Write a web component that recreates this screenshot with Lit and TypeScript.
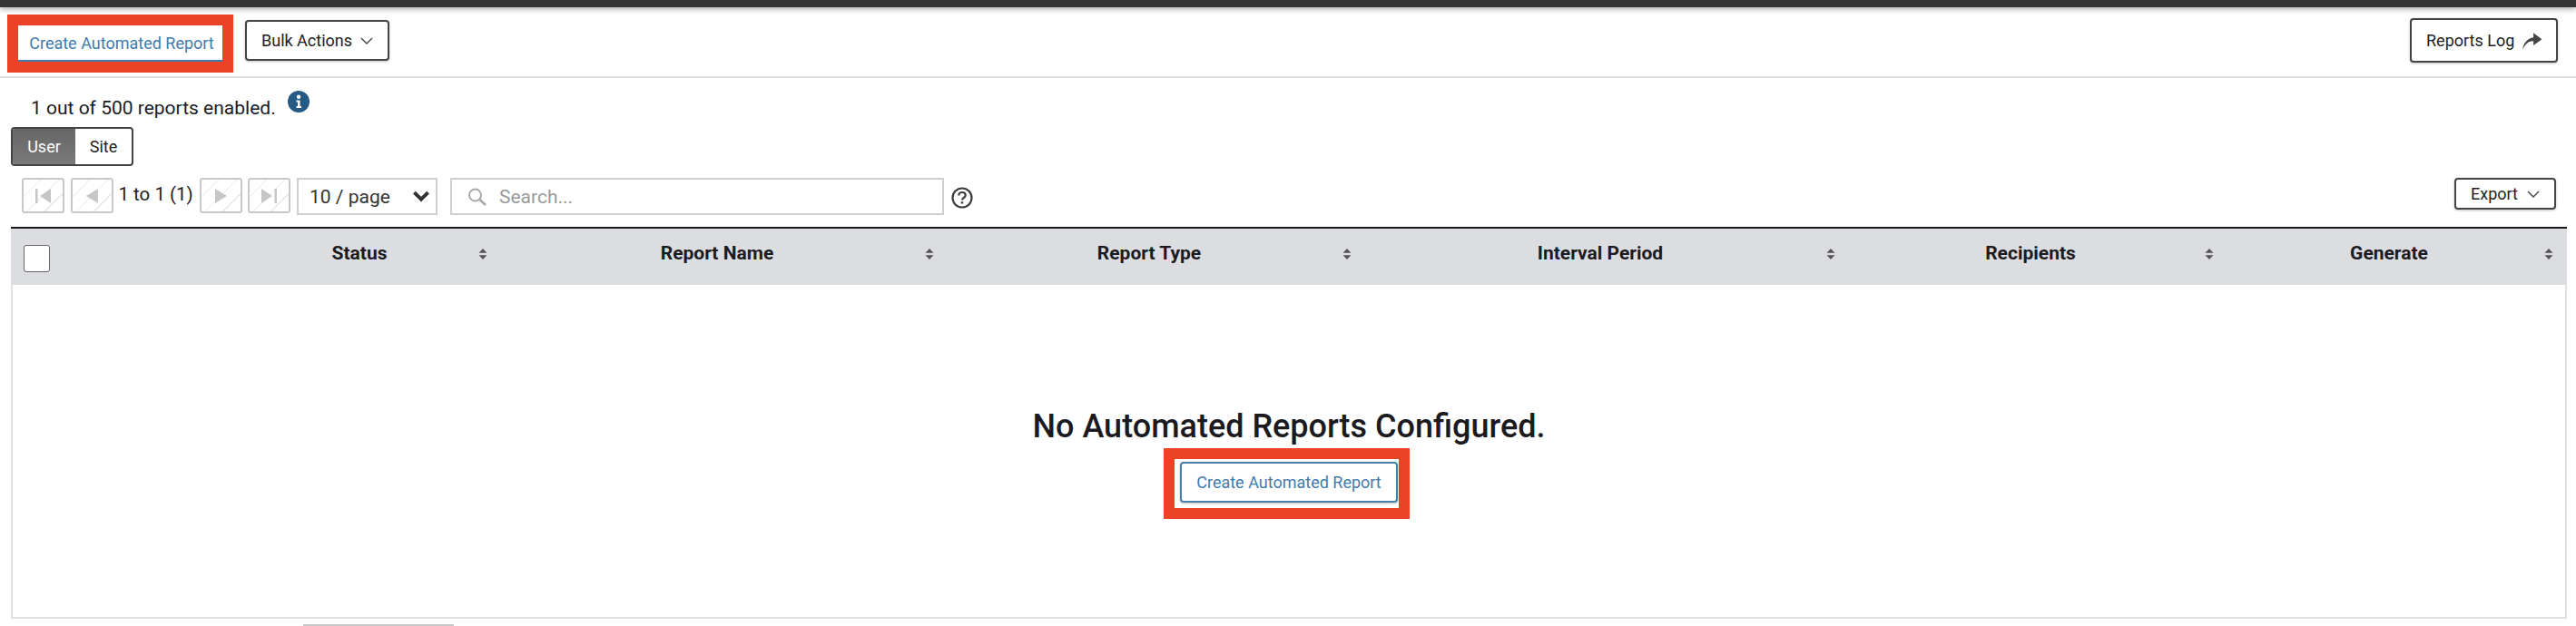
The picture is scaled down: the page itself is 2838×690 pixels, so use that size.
import { LitElement, html, css, svg } from "lit";
import { customElement } from "lit/decorators.js";

const chevron = html`<svg class="chev" viewBox="0 0 14 8" fill="none" stroke="#444" stroke-width="1.4"><path d="M1 1l6 6 6-6"/></svg>`;
const sortIcon = html`<svg class="sort" viewBox="0 0 10 12" preserveAspectRatio="none" fill="#555"><path d="M5 0l4.500 4.700h-9zM5 12L.5 7.300h9z"/></svg>`;

const columns = [
  { label: "Status", start: 66, end: 548, pad: 208 },
  { label: "Report Name", start: 548, end: 1040, pad: 22 },
  { label: "Report Type", start: 1040, end: 1500, pad: 22 },
  { label: "Interval Period", start: 1500, end: 2033, pad: 23 },
  { label: "Recipients", start: 2033, end: 2450, pad: 21 },
  { label: "Generate", start: 2450, end: 2824, pad: 20 },
];

const pagerIcons = {
  first: svg`<rect x="0" y="0" width="2.500" height="16"/><path d="M17 0v16L5 8z"/>`,
  prev: svg`<path d="M15 0v16L2 8z"/>`,
  next: svg`<path d="M2 0v16l13-8z"/>`,
  last: svg`<path d="M0 0v16l12-8z"/><rect x="14.500" y="0" width="2.500" height="16"/>`,
};
const pagerBtn = (k: keyof typeof pagerIcons) =>
  html`<div class="pg"><svg viewBox="0 0 17 16" width="17" height="16" fill="#c6c6c6">${pagerIcons[k]}</svg></div>`;

@customElement("app-root")
export class AppRoot extends LitElement {
  static styles = css`
    :host { display: block; height: 690px; overflow: hidden; background: #fff; font-family: Roboto, "Liberation Sans", sans-serif; color: #1b1b1f; }
    .topbar { height: 8px; background: #353535; box-shadow: 0 2px 6px rgba(0,0,0,.35); }
    .toolbar { height: 76px; border-bottom: 2px solid #e0e0e0; display: flex; align-items: flex-start; padding: 0 20px 0 8px; box-sizing: content-box; }
    .red { border: 12px solid #ec4226; background: #fff; box-sizing: border-box; flex: none; }
    .red.a { margin-top: 8px; width: 249px; height: 64px; }
    .red.b { width: 271px; height: 78px; padding: 3px 0 0 6px; margin-right: 5px; }
    button { font-family: inherit; background: #fff; cursor: pointer; margin: 0; padding: 0; }
    .create { color: #3f7cab; font-size: 18px; }
    .create.a { display: block; width: 225px; height: 40px; border: none; border-bottom: 2px solid #3f7cab; padding-left: 3px; }
    .create.b { display: block; width: 240px; height: 45px; border: 2px solid #4a7fa7; border-radius: 4px; box-shadow: 0 1px 3px rgba(0,0,0,.25); }
    .btn { display: flex; align-items: center; border: 2px solid #444; border-radius: 4px; color: #222; box-shadow: 0 1px 3px rgba(0,0,0,.25); flex: none; }
    .bulk { margin: 14px 0 0 13px; width: 159px; height: 45px; padding-left: 16px; gap: 9px; font-size: 18px; }
    .chev { width: 14px; height: 8px; }
    .log { margin: 12px 0 0 auto; width: 163px; height: 49px; padding-left: 16px; gap: 9px; font-size: 18px; }
    .status { display: flex; align-items: flex-start; padding: 19px 0 0 34px; height: 35px; font-size: 21px; line-height: 28px; box-sizing: content-box; }
    .status svg { margin: -5px 0 0 13px; }
    .toggle { display: flex; margin-left: 12px; width: 135px; height: 43px; border: 2px solid #444; border-radius: 4px; box-sizing: border-box; overflow: hidden; font-size: 18px; }
    .toggle div { display: flex; align-items: center; justify-content: center; }
    .toggle .on { width: 69px; background: linear-gradient(#666, #7a7a7a); color: #fff; }
    .toggle .off { flex: 1; color: #222; }
    .pager { display: flex; align-items: flex-start; margin-top: 13px; padding-left: 24px; height: 54px; }
    .pg { box-sizing: border-box; flex: none; width: 47px; height: 39px; margin-right: 6.500px; border: 2px solid #c8c8c8; border-radius: 3px; display: flex; align-items: center; justify-content: center;
      background: repeating-linear-gradient(135deg, #fff 0 13px, #e6e6e6 13px 14px); }
    .range { flex: none; width: 89px; margin-left: -0.500px; height: 39px; line-height: 37px; font-size: 20.500px; white-space: nowrap; color: #222; }
    .select { flex: none; margin-left: 0.500px; box-sizing: border-box; width: 155px; height: 41px; border: 2px solid #cfcfcf; display: flex; align-items: center; justify-content: space-between; padding: 0 6px 0 12px; font-size: 21px; color: #333; }
    .search { flex: none; margin-left: 14px; box-sizing: border-box; width: 544px; height: 41px; border: 2px solid #cfcfcf; display: flex; align-items: center; padding-left: 17px; gap: 14px; }
    .search input { border: none; outline: none; flex: 1; min-width: 0; font: 21px Roboto, sans-serif; padding: 0; color: #333; background: none; }
    .search input::placeholder { color: #9a9a9a; }
    .help { flex: none; margin: 10px 0 0 8px; }
    .export { margin: 0 22px 0 auto; width: 112px; height: 35px; padding-left: 16px; gap: 10px; font-size: 18px; }
    .table { margin: 0 10px 0 12px; }
    .head { height: 62px; border-top: 2px solid #17171b; background: #dcdde1; display: grid; grid-template-columns: 54px repeat(6, auto) 1fr; box-sizing: content-box; }
    .check { box-sizing: border-box; margin: 18px 0 0 14px; width: 29px; height: 30px; border: 1.500px solid #666; border-radius: 3px; background: #fff; }
    .col { display: flex; align-items: flex-start; padding-top: 15px; box-sizing: border-box; }
    .col span { flex: 1; text-align: center; font-size: 21px; line-height: 24px; font-weight: 700; white-space: nowrap; }
    .sort { width: 10px; height: 12px; margin: 7px 11px 0 9px; flex: none; }
    .body { box-sizing: border-box; height: 368px; border: 2px solid #e0e0e0; border-top: none; display: flex; flex-direction: column; align-items: center; padding-top: 131px; }
    h1 { margin: 0 0 -1px; font-size: 36px; line-height: 50px; font-weight: 500; color: #1b1b1f; white-space: nowrap; }
    .thumb { margin: 6px 0 0 334px; width: 166px; height: 2px; background: #c8c8c8; }
  `;

  render() {
    return html`
      <div class="topbar"></div>
      <div class="toolbar">
        <div class="red a"><button class="create a">Create Automated Report</button></div>
        <button class="btn bulk">Bulk Actions ${chevron}</button>
        <button class="btn log">Reports Log
          <svg width="22" height="20" viewBox="0 0 20 18" fill="#444"><path d="M0 18C1 11 5 6.500 11 5.500V1l8.500 6.500-8.500 6V9.300C6.500 9 3 12 0 18z"/></svg>
        </button>
      </div>
      <div class="status">1 out of 500 reports enabled.
        <svg width="24" height="24" viewBox="0 0 24 24"><circle cx="12" cy="12" r="12" fill="#255a85"/><circle cx="12" cy="6.800" r="2.200" fill="#fff"/><path d="M9.500 10.500h4v6.500h1.500v2H9.500v-2H11v-4.500H9.500z" fill="#fff"/></svg>
      </div>
      <div class="toggle"><div class="on">User</div><div class="off">Site</div></div>
      <div class="pager">
        ${pagerBtn("first")}${pagerBtn("prev")}
        <div class="range">1 to 1 (1)</div>
        ${pagerBtn("next")}${pagerBtn("last")}
        <div class="select">10 / page
          <svg width="20" height="13" viewBox="0 0 18 12" fill="none" stroke="#333" stroke-width="3.600"><path d="M2 2l7 7 7-7"/></svg>
        </div>
        <div class="search">
          <svg width="21" height="20" viewBox="0 0 21 20" fill="none" stroke="#a8a8a8" stroke-width="2"><circle cx="8.500" cy="8" r="6.500"/><path d="M13.500 13l6.500 6" stroke-width="2.600"/></svg>
          <input placeholder="Search..." />
        </div>
        <svg class="help" width="24" height="24" viewBox="0 0 24 24" fill="none" stroke="#3c3c3c" stroke-width="2.200"><circle cx="12" cy="12" r="10.500"/><path d="M8.300 9.500c0-2.200 1.700-3.500 3.700-3.500s3.700 1.300 3.700 3.300c0 2.700-3.700 2.700-3.700 5.200"/><path d="M12 16.200v2.300" stroke-width="2.400"/></svg>
        <button class="btn export">Export ${chevron}</button>
      </div>
      <div class="table">
        <div class="head">
          <div><div class="check"></div></div>
          ${columns.map(
            (c) => html`<div class="col" style="width:${c.end - c.start}px;padding-left:${c.pad}px"><span>${c.label}</span>${sortIcon}</div>`
          )}
        </div>
        <div class="body">
          <h1>No Automated Reports Configured.</h1>
          <div class="red b"><button class="create b">Create Automated Report</button></div>
        </div>
      </div>
      <div class="thumb"></div>
    `;
  }
}
